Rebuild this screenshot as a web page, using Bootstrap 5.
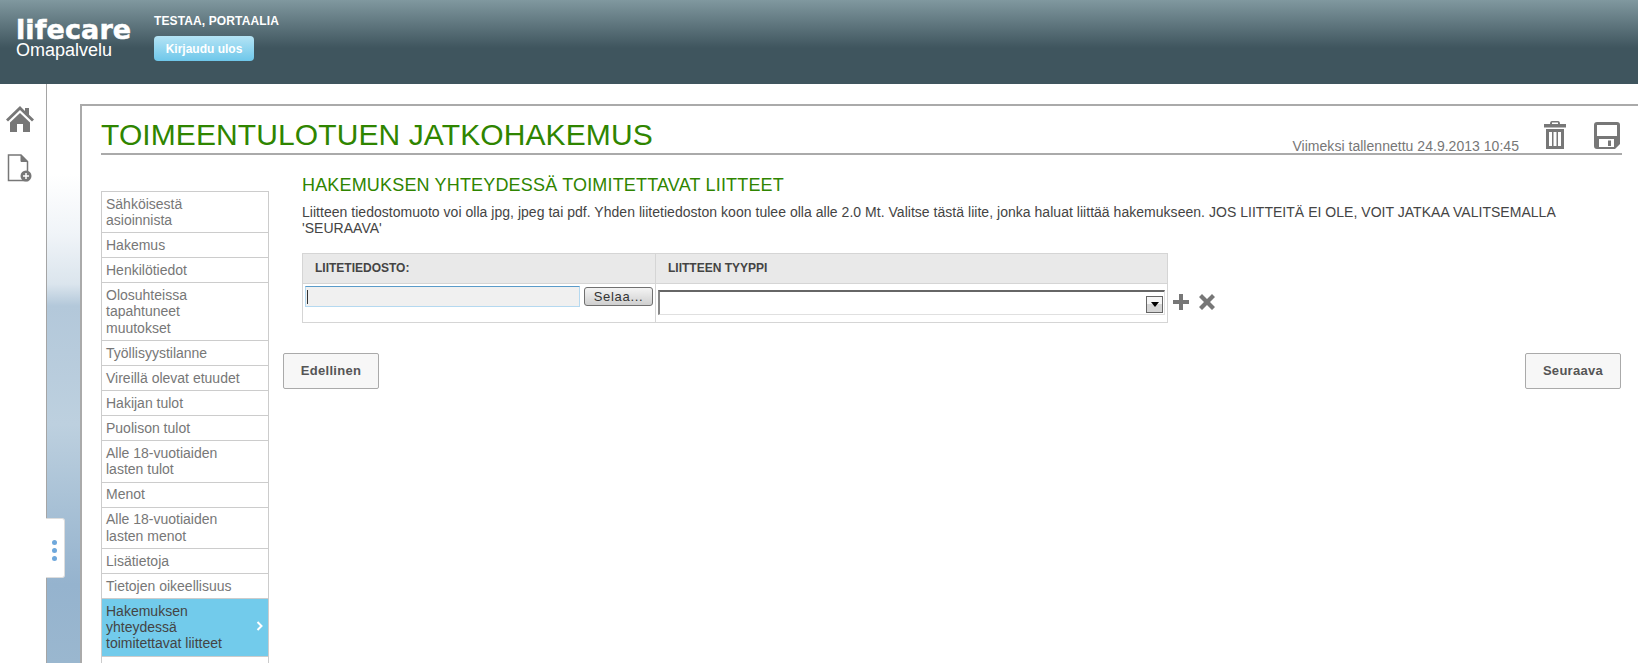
<!DOCTYPE html>
<html lang="fi">
<head>
    <meta charset="UTF-8">
    <meta name="viewport" content="width=device-width, initial-scale=1.0">
    <title>Toimeentulotuen jatkohakemus</title>
    <link rel="stylesheet" href="https://cdn.jsdelivr.net/npm/bootstrap@5.3.0/dist/css/bootstrap.min.css">
    <style>
        html, body { height: 663px; overflow: hidden; }
        body { font-family: "Liberation Sans", Arial, sans-serif; font-size: 14px; color: #444; background: #fff; }
        .top-bar { height: 84px; background: linear-gradient(#80989f 0, #3f555e 48px, #3f555e 100%); color: #fff; padding-left: 16px; }
        .brand-box { width: 138px; padding-top: 19px; }
        .brand-name { font-family: "DejaVu Sans", "Liberation Sans", sans-serif; font-size: 27px; line-height: 22px; font-weight: 700; letter-spacing: .1px; -webkit-text-stroke: .5px #fff; }
        .brand-sub { font-size: 18px; line-height: 18px; font-weight: 400; }
        .user-box { padding-top: 14px; }
        .user-name { font-size: 12px; line-height: 15px; font-weight: 700; letter-spacing: .12px; }
        .logout-btn { display: block; width: 100px; height: 25px; margin-top: 7px; padding: 0; border: 0; border-radius: 4px; font-size: 12px; font-weight: 700; color: #fff; background: linear-gradient(#b5e4f5, #6ec7ea); }
        .page-body { height: 579px; }
        .side-rail { width: 47px; border-right: 1px solid #a5a5a5; padding-top: 21px; }
        .rail-icon { display: block; margin: 0 0 21px 6px; }
        .bg-strip { width: 33px; background: linear-gradient(#fff 0, #fff 90px, #f0f4f8 150px, #dbe5ed 200px, #b3c8da 222px, #bdd0df 340px, #abc3d7 410px, #95b3ce 500px, #9ab7cf 100%); }
        .grip-tab { position: absolute; left: 46px; top: 434px; width: 19px; height: 60px; background: #fff; border: 1px solid #ddd; border-left: 0; border-radius: 0 3px 3px 0; padding-top: 21px; }
        .grip-tab i { display: block; width: 5px; height: 5px; margin: 0 0 3px 6px; border-radius: 50%; background: #6fa8dc; }
        .form-panel { margin-top: 20px; border-top: 2px solid #aaa; border-left: 2px solid #aaa; padding: 0 16px 0 19px; background: #fff; }
        .title-row { height: 49px; border-bottom: 2px solid #aaa; }
        .page-title { margin: 10px 0 0; font-size: 30px; line-height: 37px; font-weight: 400; color: #2f8500; letter-spacing: .1px; }
        .saved-text { color: #777; font-size: 14px; line-height: 16px; margin: 0 25px -1px 0; letter-spacing: .03px; }
        .title-tools { gap: 28px; margin: 0 2px 4px 0; }
        .step-nav { width: 168px; margin-top: 36px; border: 1px solid #ccc; border-bottom: 0; flex: none; height: 600px; }
        .step-nav a { display: block; padding: 3.6px 28px 4px 4px; line-height: 16.4px; border-bottom: 1px solid #ccc; color: #777; text-decoration: none; position: relative; }
        .step-nav a.current { background: #72cbeb; color: #444; }
        .step-chevron { position: absolute; right: 5px; top: 22px; }
        .step-content { width: 1353px; padding-left: 14px; flex: none; }
        .step-title { margin: 20px 0 0 19px; font-size: 18px; line-height: 21px; font-weight: 400; color: #2f8500; letter-spacing: .17px; }
        .step-help { margin: 8px 0 0 19px; line-height: 16px; letter-spacing: .03px; }
        .attach-row { margin: 17px 0 0 19px; align-items: flex-start; }
        .attach-table { width: 866px; height: 70px; border-collapse: collapse; }
        .attach-table th, .attach-table td { border: 1px solid #d5d5d5; padding: 0; vertical-align: top; }
        .attach-table th { height: 30px; background: #e9e9e9; padding-left: 12px; font-size: 12px; line-height: 28px; color: #444; }
        .file-field { width: 275px; height: 21px; margin: 2px 0 0 2px; background: #f0f0f0; border: 1px solid #b5d9f0; border-top-color: #5a9bc9; position: relative; }
        .file-field::before { content: ""; position: absolute; left: 1px; top: 3px; height: 14px; border-left: 1px solid #333; }
        .browse-btn { width: 69px; height: 19px; margin: 3px 0 0 4px; padding: 0; border: 1px solid #707070; border-radius: 3px; font-size: 13px; line-height: 15px; color: #333; background: linear-gradient(#f4f4f4, #cfcfcf); letter-spacing: .7px; }
        .type-select { height: 25px; margin: 6px 2px 0 2px; border: 1px solid #e0e0e0; border-top: 2px solid #666; border-left: 2px solid #888; background: #fff; justify-content: flex-end; align-items: flex-end; padding: 0 1px 1px 0; }
        .select-arrow { width: 17px; height: 17px; border: 1px solid #666; background: linear-gradient(#f5f5f5 50%, #d5d5d5 50%); display: flex; align-items: center; justify-content: center; }
        .select-arrow::before { content: ""; border: 4px solid transparent; border-top: 5px solid #000; border-bottom: 0; }
        .row-tools { gap: 10px; margin-left: 5px; margin-top: 41px; }
        .nav-btns { margin: 30px 0 0 0; padding-right: 1px; }
        .step-btn { width: 96px; height: 36px; padding: 0; border: 1px solid #aaa; border-radius: 2px; background: #f7f7f7; font-size: 13px; font-weight: 700; color: #555; letter-spacing: .3px; }
    </style>
</head>
<body>
    <header class="top-bar d-flex">
        <div class="brand-box">
            <div class="brand-name">lifecare</div>
            <div class="brand-sub">Omapalvelu</div>
        </div>
        <div class="user-box">
            <div class="user-name">TESTAA, PORTAALIA</div>
            <button class="logout-btn" type="button">Kirjaudu ulos</button>
        </div>
    </header>

    <div class="page-body d-flex position-relative">
        <nav class="side-rail flex-shrink-0">
            <svg class="rail-icon" width="28" height="28" viewBox="0 0 28 28" fill="#777"><path d="M14 1 0 14.500 2 16.500 14 5 26 16.500 28 14.500 23 9.700V3H19V5.900ZM4 17.500V27H11V19H17V27H24V17.500L14 8Z"/></svg>
            <svg class="rail-icon" width="28" height="30" viewBox="0 0 28 30" fill="none"><path d="M2.500 1H15L21.500 7.500V26.500H2.500Z" stroke="#777" stroke-width="1.500" fill="#fff"/><path d="M15 1V7.500H21.500Z" fill="#777" stroke="#777"/><circle cx="20" cy="22" r="5.500" fill="#777"/><path d="M17 22H23M20 19V25" stroke="#fff" stroke-width="1.500"/></svg>
        </nav>
        <div class="bg-strip flex-shrink-0"></div>
        <div class="grip-tab"><i></i><i></i><i></i></div>

        <main class="form-panel flex-grow-1 overflow-hidden">
            <div class="title-row d-flex align-items-end">
                <h1 class="page-title me-auto align-self-start">TOIMEENTULOTUEN JATKOHAKEMUS</h1>
                <span class="saved-text">Viimeksi tallennettu 24.9.2013 10:45</span>
                <div class="title-tools d-flex align-items-end">
                    <svg width="22" height="28" viewBox="0 0 22 28" fill="#777"><path d="M8 0H14Q16 0 16 3H22V6.500H0V3H6Q6 0 8 0ZM8 1.500V3H14V1.500ZM2 8H20V28H2ZM5 11V25H8V11ZM9.500 11V25H12.500V11ZM14 11V25H17V11Z" fill-rule="evenodd"/></svg>
                    <svg width="26" height="27" viewBox="0 0 26 27" fill="#777"><path d="M3 0H23Q26 0 26 3V22L21 27H3Q0 27 0 24V3Q0 0 3 0ZM3 3V14H23V3ZM5 17V25H20V17ZM14 18.500V24H17V18.500Z" fill-rule="evenodd"/></svg>
                </div>
            </div>

            <div class="d-flex">
                <div class="step-nav">
                    <a href="#">Sähköisestä asioinnista</a>
                    <a href="#">Hakemus</a>
                    <a href="#">Henkilötiedot</a>
                    <a href="#">Olosuhteissa tapahtuneet muutokset</a>
                    <a href="#">Työllisyystilanne</a>
                    <a href="#">Vireillä olevat etuudet</a>
                    <a href="#">Hakijan tulot</a>
                    <a href="#">Puolison tulot</a>
                    <a href="#">Alle 18-vuotiaiden lasten tulot</a>
                    <a href="#">Menot</a>
                    <a href="#">Alle 18-vuotiaiden lasten menot</a>
                    <a href="#">Lisätietoja</a>
                    <a href="#">Tietojen oikeellisuus</a>
                    <a href="#" class="current">Hakemuksen yhteydessä toimitettavat liitteet
                        <svg class="step-chevron" width="7" height="10" viewBox="0 0 7 10" fill="none"><path d="M1.500 1 5.500 5 1.500 9" stroke="#fff" stroke-width="2"/></svg>
                    </a>
                </div>

                <div class="step-content">
                    <h2 class="step-title">HAKEMUKSEN YHTEYDESSÄ TOIMITETTAVAT LIITTEET</h2>
                    <p class="step-help">Liitteen tiedostomuoto voi olla jpg, jpeg tai pdf. Yhden liitetiedoston koon tulee olla alle 2.0 Mt. Valitse tästä liite, jonka haluat liittää hakemukseen. JOS LIITTEITÄ EI OLE, VOIT JATKAA VALITSEMALLA 'SEURAAVA'</p>
                    <div class="attach-row d-flex">
                        <table class="attach-table">
                            <tr>
                                <th style="width: 353px">LIITETIEDOSTO:</th>
                                <th>LIITTEEN TYYPPI</th>
                            </tr>
                            <tr>
                                <td><div class="d-flex">
                                    <div class="file-field"></div>
                                    <button class="browse-btn" type="button">Selaa...</button>
                                </div></td>
                                <td><div class="type-select d-flex"><span class="select-arrow"></span></div></td>
                            </tr>
                        </table>
                        <div class="row-tools d-flex">
                            <svg width="16" height="16" viewBox="0 0 16 16" fill="#777"><path d="M6 0H10V6H16V10H10V16H6V10H0V6H6Z"/></svg>
                            <svg width="16" height="16" viewBox="0 0 16 16" fill="#777"><path d="M3 0 8 5 13 0 16 3 11 8 16 13 13 16 8 11 3 16 0 13 5 8 0 3Z"/></svg>
                        </div>
                    </div>
                    <div class="nav-btns d-flex justify-content-between">
                        <button class="step-btn" type="button">Edellinen</button>
                        <button class="step-btn" type="button">Seuraava</button>
                    </div>
                </div>
            </div>
        </main>
    </div>
    <script src="https://cdn.jsdelivr.net/npm/bootstrap@5.3.0/dist/js/bootstrap.bundle.min.js"></script>
</body>
</html>
